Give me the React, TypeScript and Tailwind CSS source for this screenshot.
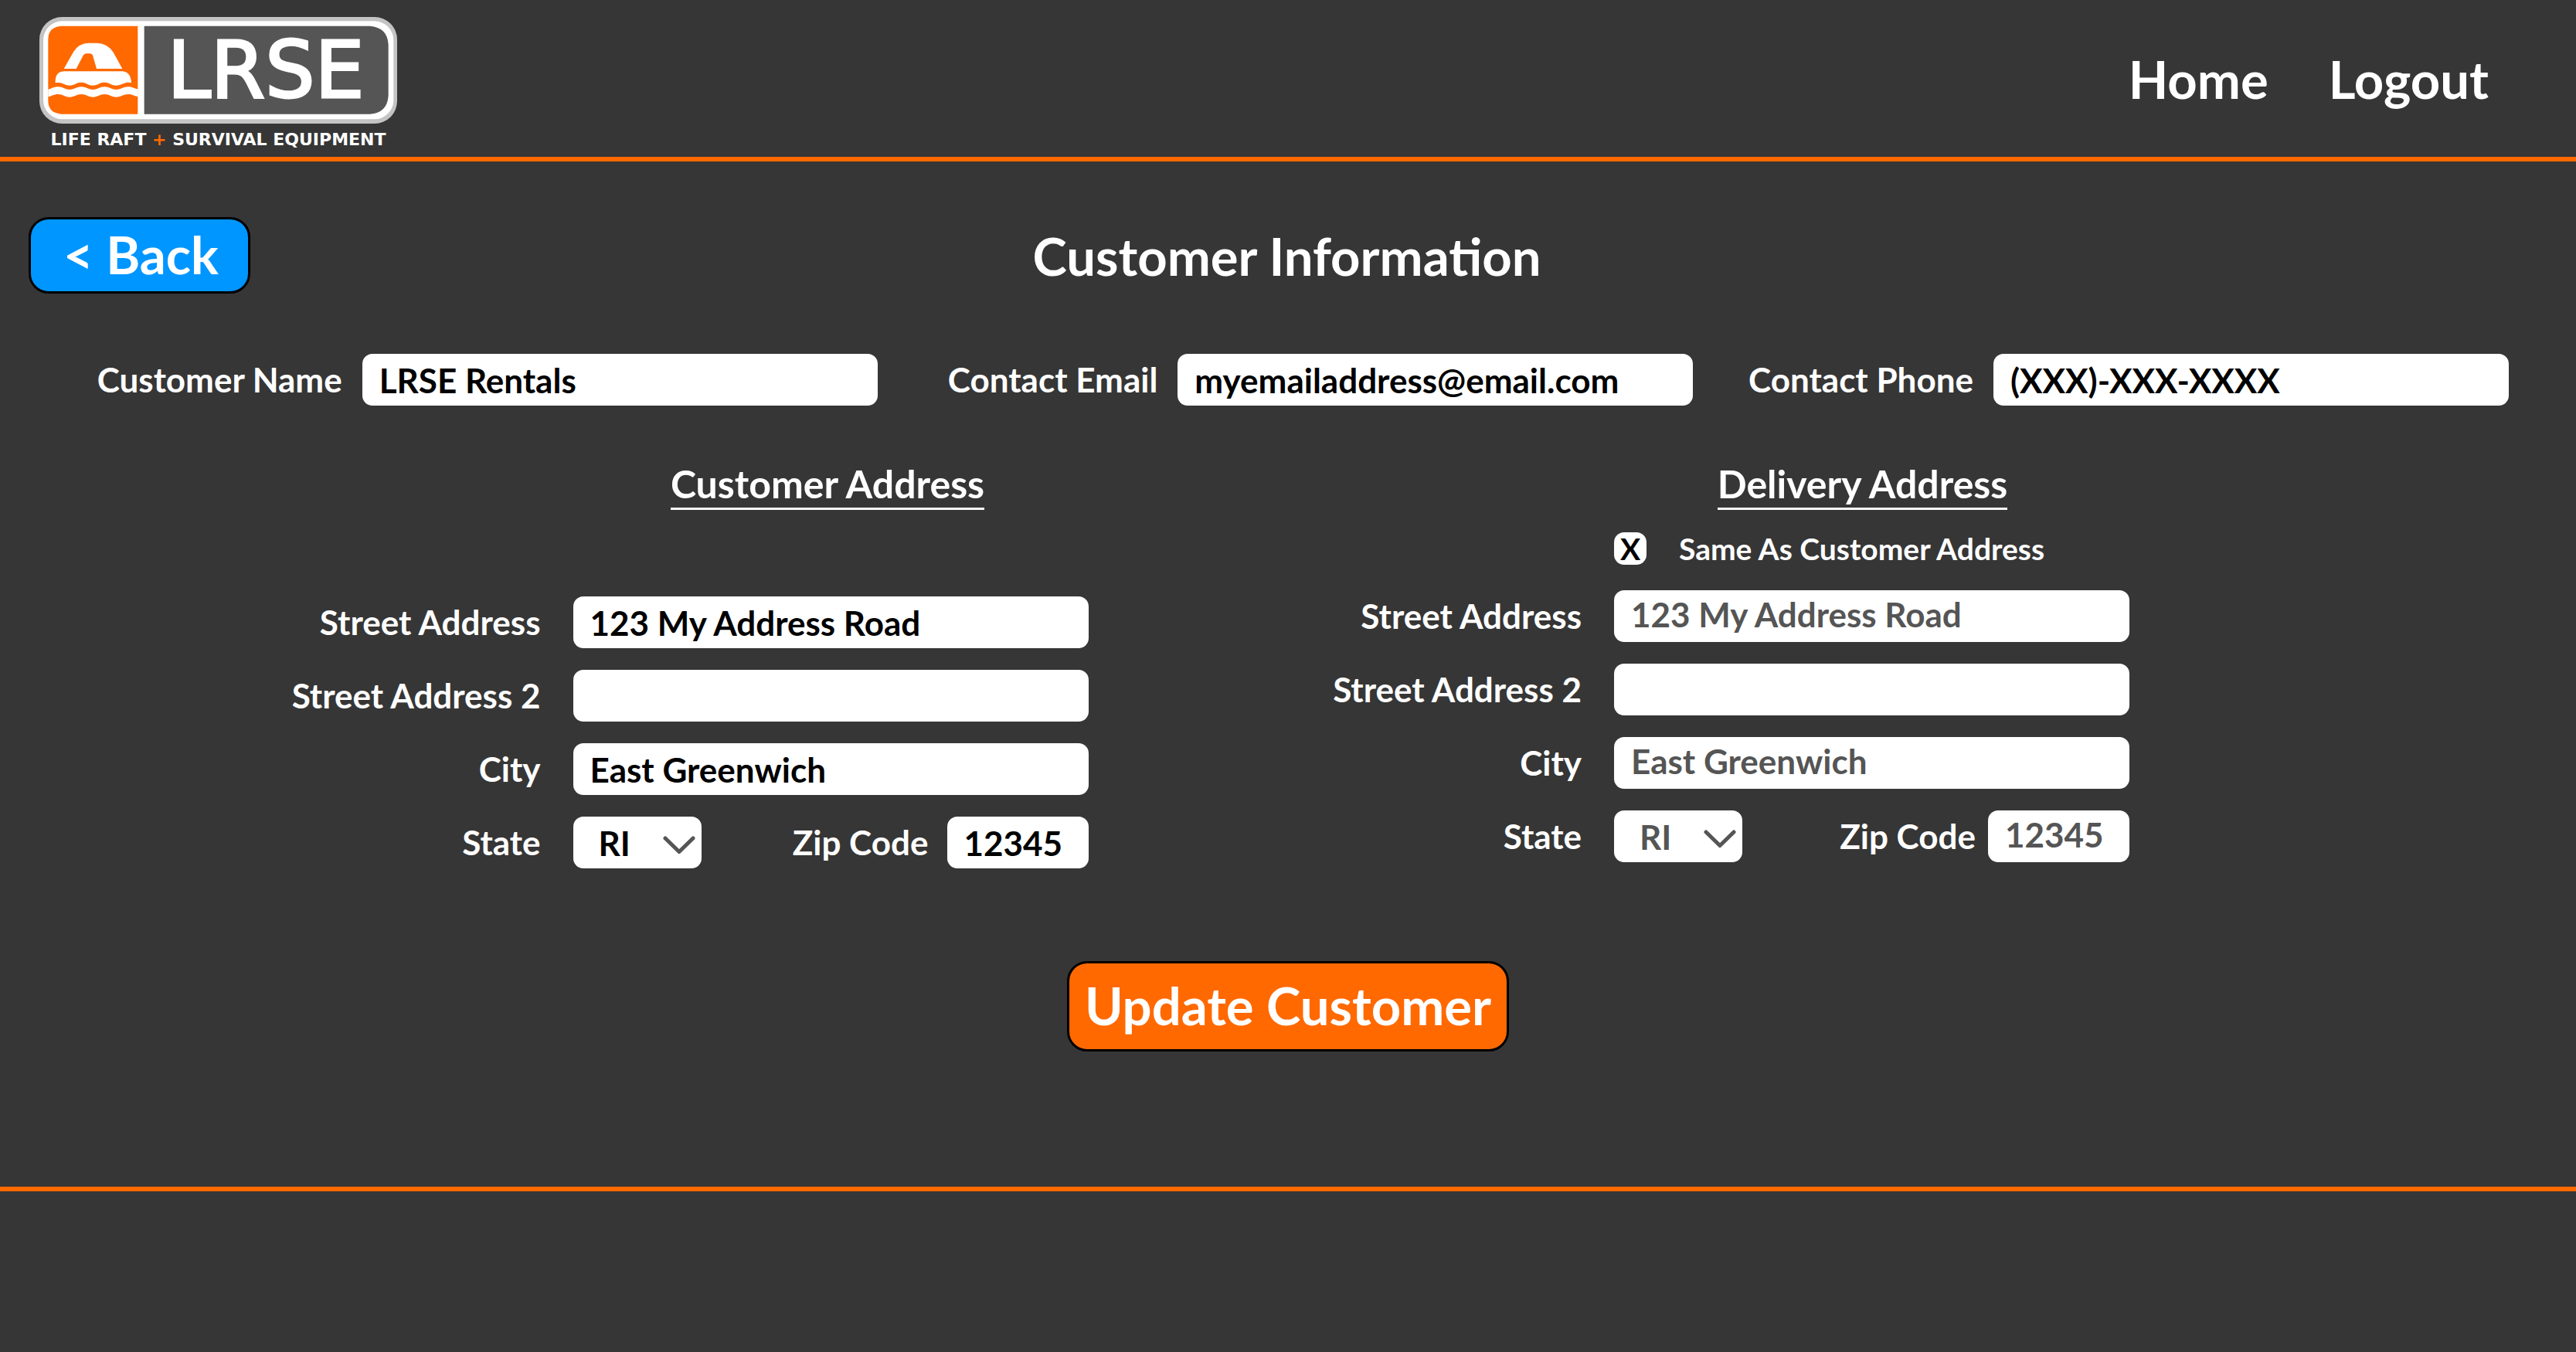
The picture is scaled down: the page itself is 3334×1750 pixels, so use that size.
import { useId } from "react";
import type { ReactNode } from "react";

function Logo() {
  return (
    <a href="#" aria-label="LRSE home" className="flex w-[463px] flex-col items-center gap-[7px]">
      <svg viewBox="63 66 1389 414" className="h-[138px] w-[463px]" aria-hidden="true">
        <rect x="63" y="66" width="1389" height="414" rx="88" fill="#c4c4c4" />
        <rect x="78" y="82" width="1360" height="381" rx="74" fill="#fff" />
        <path d="M445 101V443H149Q97 440 97 391V153Q97 104 149 101Z" fill="#ff6900" />
        <path d="M470 101H1346Q1414 106 1418 173V371Q1414 438 1346 443H470Z" fill="#555" />
        <path
          d="M158 267L196 200Q216 168 254 167H288Q328 169 350 203L385 267H285L271 218Q268 208 258 208H246Q238 208 234 214L206 267Z"
          fill="#fff"
        />
        <path
          d="M125 322V312Q127 278 160 277H386Q418 280 420 322C412 319 398 319 388 325C370 334 352 334 338 326C324 319 308 319 296 325C280 334 262 334 248 326C234 319 218 319 206 325C190 334 172 334 158 326C146 320 136 320 125 322Z"
          fill="#fff"
        />
        <path
          d="M97 347C112 344 118 337 136 337C156 337 160 348 180 348C200 348 206 337 226 337C246 337 252 348 271 348C290 348 296 337 316 337C336 337 342 348 361 348C380 348 388 337 407 337C424 337 430 344 446 346V375C430 373 424 366 407 366C388 366 380 377 361 377C342 377 336 366 316 366C296 366 290 377 271 377C252 377 246 366 226 366C206 366 200 377 180 377C160 377 156 366 136 366C118 366 112 373 97 376Z"
          fill="#fff"
        />
        <text
          x="942"
          y="379"
          textAnchor="middle"
          fill="#fff"
          stroke="#fff"
          strokeWidth="9"
          className="font-['DejaVu_Sans',sans-serif] text-[304px]"
        >
          LRSE
        </text>
      </svg>
      <span className="font-['DejaVu_Sans',sans-serif] text-[22px] leading-[28px] font-bold whitespace-nowrap text-white">
        LIFE RAFT <span className="text-[#ff6900]">+</span> SURVIVAL EQUIPMENT
      </span>
    </a>
  );
}

function TextInput({ id, value, disabled }: { id: string; value: string; disabled?: boolean }) {
  return (
    <input
      id={id}
      type="text"
      defaultValue={value}
      disabled={disabled}
      className="h-[67px] w-full min-w-0 rounded-[13px] bg-white px-[22px] text-[44px] font-bold text-black disabled:pb-[5px] disabled:text-[#555]"
    />
  );
}

function Label({ htmlFor, children }: { htmlFor: string; children: ReactNode }) {
  return (
    <label htmlFor={htmlFor} className="text-right text-[44px] leading-[53px] font-bold whitespace-nowrap">
      {children}
    </label>
  );
}

function ContactField({ label, value }: { label: string; value: string }) {
  const id = useId();
  return (
    <div className="flex items-center justify-end gap-[26px]">
      <Label htmlFor={id}>{label}</Label>
      <div className="w-[667px]">
        <TextInput id={id} value={value} />
      </div>
    </div>
  );
}

function StateSelect({ id, disabled }: { id: string; disabled?: boolean }) {
  return (
    <div className="relative w-[166px]">
      <select
        id={id}
        defaultValue="RI"
        disabled={disabled}
        className="h-[67px] w-full appearance-none rounded-[13px] bg-white pl-[33px] text-[44px] font-bold text-black disabled:text-[#555] disabled:opacity-100"
      >
        <option>CT</option>
        <option>MA</option>
        <option>RI</option>
      </select>
      <svg
        viewBox="0 0 42 24"
        className="pointer-events-none absolute top-[25px] right-2 h-6 w-[42px]"
        fill="none"
        stroke="#555"
        strokeWidth="5"
        strokeLinecap="round"
        strokeLinejoin="round"
        aria-hidden="true"
      >
        <path d="M3 3L21 20.5L39 3" />
      </svg>
    </div>
  );
}

function AddressFields({ disabled }: { disabled?: boolean }) {
  const id = useId();
  return (
    <div className="grid grid-cols-[1fr_667px] items-center gap-x-[42px] gap-y-7">
      <Label htmlFor={id + "street"}>Street Address</Label>
      <TextInput id={id + "street"} value="123 My Address Road" disabled={disabled} />
      <Label htmlFor={id + "street2"}>Street Address 2</Label>
      <TextInput id={id + "street2"} value="" disabled={disabled} />
      <Label htmlFor={id + "city"}>City</Label>
      <TextInput id={id + "city"} value="East Greenwich" disabled={disabled} />
      <Label htmlFor={id + "state"}>State</Label>
      <div className="flex items-center justify-between">
        <StateSelect id={id + "state"} disabled={disabled} />
        <div className={disabled ? "flex items-center gap-4" : "flex items-center gap-6"}>
          <Label htmlFor={id + "zip"}>Zip Code</Label>
          <div className="w-[183px]">
            <TextInput id={id + "zip"} value="12345" disabled={disabled} />
          </div>
        </div>
      </div>
    </div>
  );
}

function SectionHeading({ children }: { children: ReactNode }) {
  return (
    <h2 className="border-b-3 border-white text-[50px] leading-[62px] font-bold whitespace-nowrap">{children}</h2>
  );
}

export default function App() {
  return (
    <div className="flex min-h-screen flex-col bg-[#363636] font-['Lato',sans-serif] text-white">
      <header className="flex h-[209px] items-center justify-between border-b-6 border-[#ff6900] pr-[113px] pl-[51px]">
        <div className="self-start pt-[22px]">
          <Logo />
        </div>
        <nav className="flex gap-[78px] text-[67px] leading-[80px] font-bold">
          <a href="#">Home</a>
          <a href="#">Logout</a>
        </nav>
      </header>

      <main className="pt-[72px] pb-[175px]">
        <div className="grid grid-cols-[1fr_auto_1fr] items-center pr-10 pl-[37px]">
          <button
            type="button"
            className="h-[99px] w-[287px] justify-self-start rounded-[26px] border-3 border-black bg-[#0096ff] pb-1 pl-1 text-[67px] leading-[80px] font-bold"
          >
            &lt; Back
          </button>
          <h1 className="text-[67px] leading-[80px] font-bold">Customer Information</h1>
        </div>

        <form>
          <div className="mt-[78px] grid grid-cols-3 pr-[87px] pl-20">
            <ContactField label="Customer Name" value="LRSE Rentals" />
            <ContactField label="Contact Email" value="myemailaddress@email.com" />
            <ContactField label="Contact Phone" value="(XXX)-XXX-XXXX" />
          </div>

          <div className="mt-[70px] grid grid-cols-2 pr-[578px] pl-[61px]">
            <section>
              <div className="mb-28 ml-auto flex w-[667px] justify-center pr-2">
                <SectionHeading>Customer Address</SectionHeading>
              </div>
              <AddressFields />
            </section>
            <section>
              <div className="ml-auto flex w-[667px] justify-center pr-6">
                <SectionHeading>Delivery Address</SectionHeading>
              </div>
              <label className="mt-[29px] mb-[33px] ml-auto flex h-[42px] w-[667px] items-center gap-[42px] text-[39px] font-bold">
                <span className="grid place-items-center">
                  <input
                    type="checkbox"
                    defaultChecked
                    className="peer col-start-1 row-start-1 size-[42px] appearance-none rounded-[13px] bg-white"
                  />
                  <span className="pointer-events-none invisible col-start-1 row-start-1 leading-[42px] font-bold text-black peer-checked:visible">
                    X
                  </span>
                </span>
                Same As Customer Address
              </label>
              <AddressFields disabled />
            </section>
          </div>

          <div className="mt-[120px] flex justify-center">
            <button
              type="submit"
              className="h-[117px] rounded-[26px] border-3 border-black bg-[#ff6900] px-5 pb-1 text-[67px] leading-[80px] font-bold"
            >
              Update Customer
            </button>
          </div>
        </form>
      </main>

      <footer className="min-h-[214px] flex-1 border-t-6 border-[#ff6900]" />
    </div>
  );
}
